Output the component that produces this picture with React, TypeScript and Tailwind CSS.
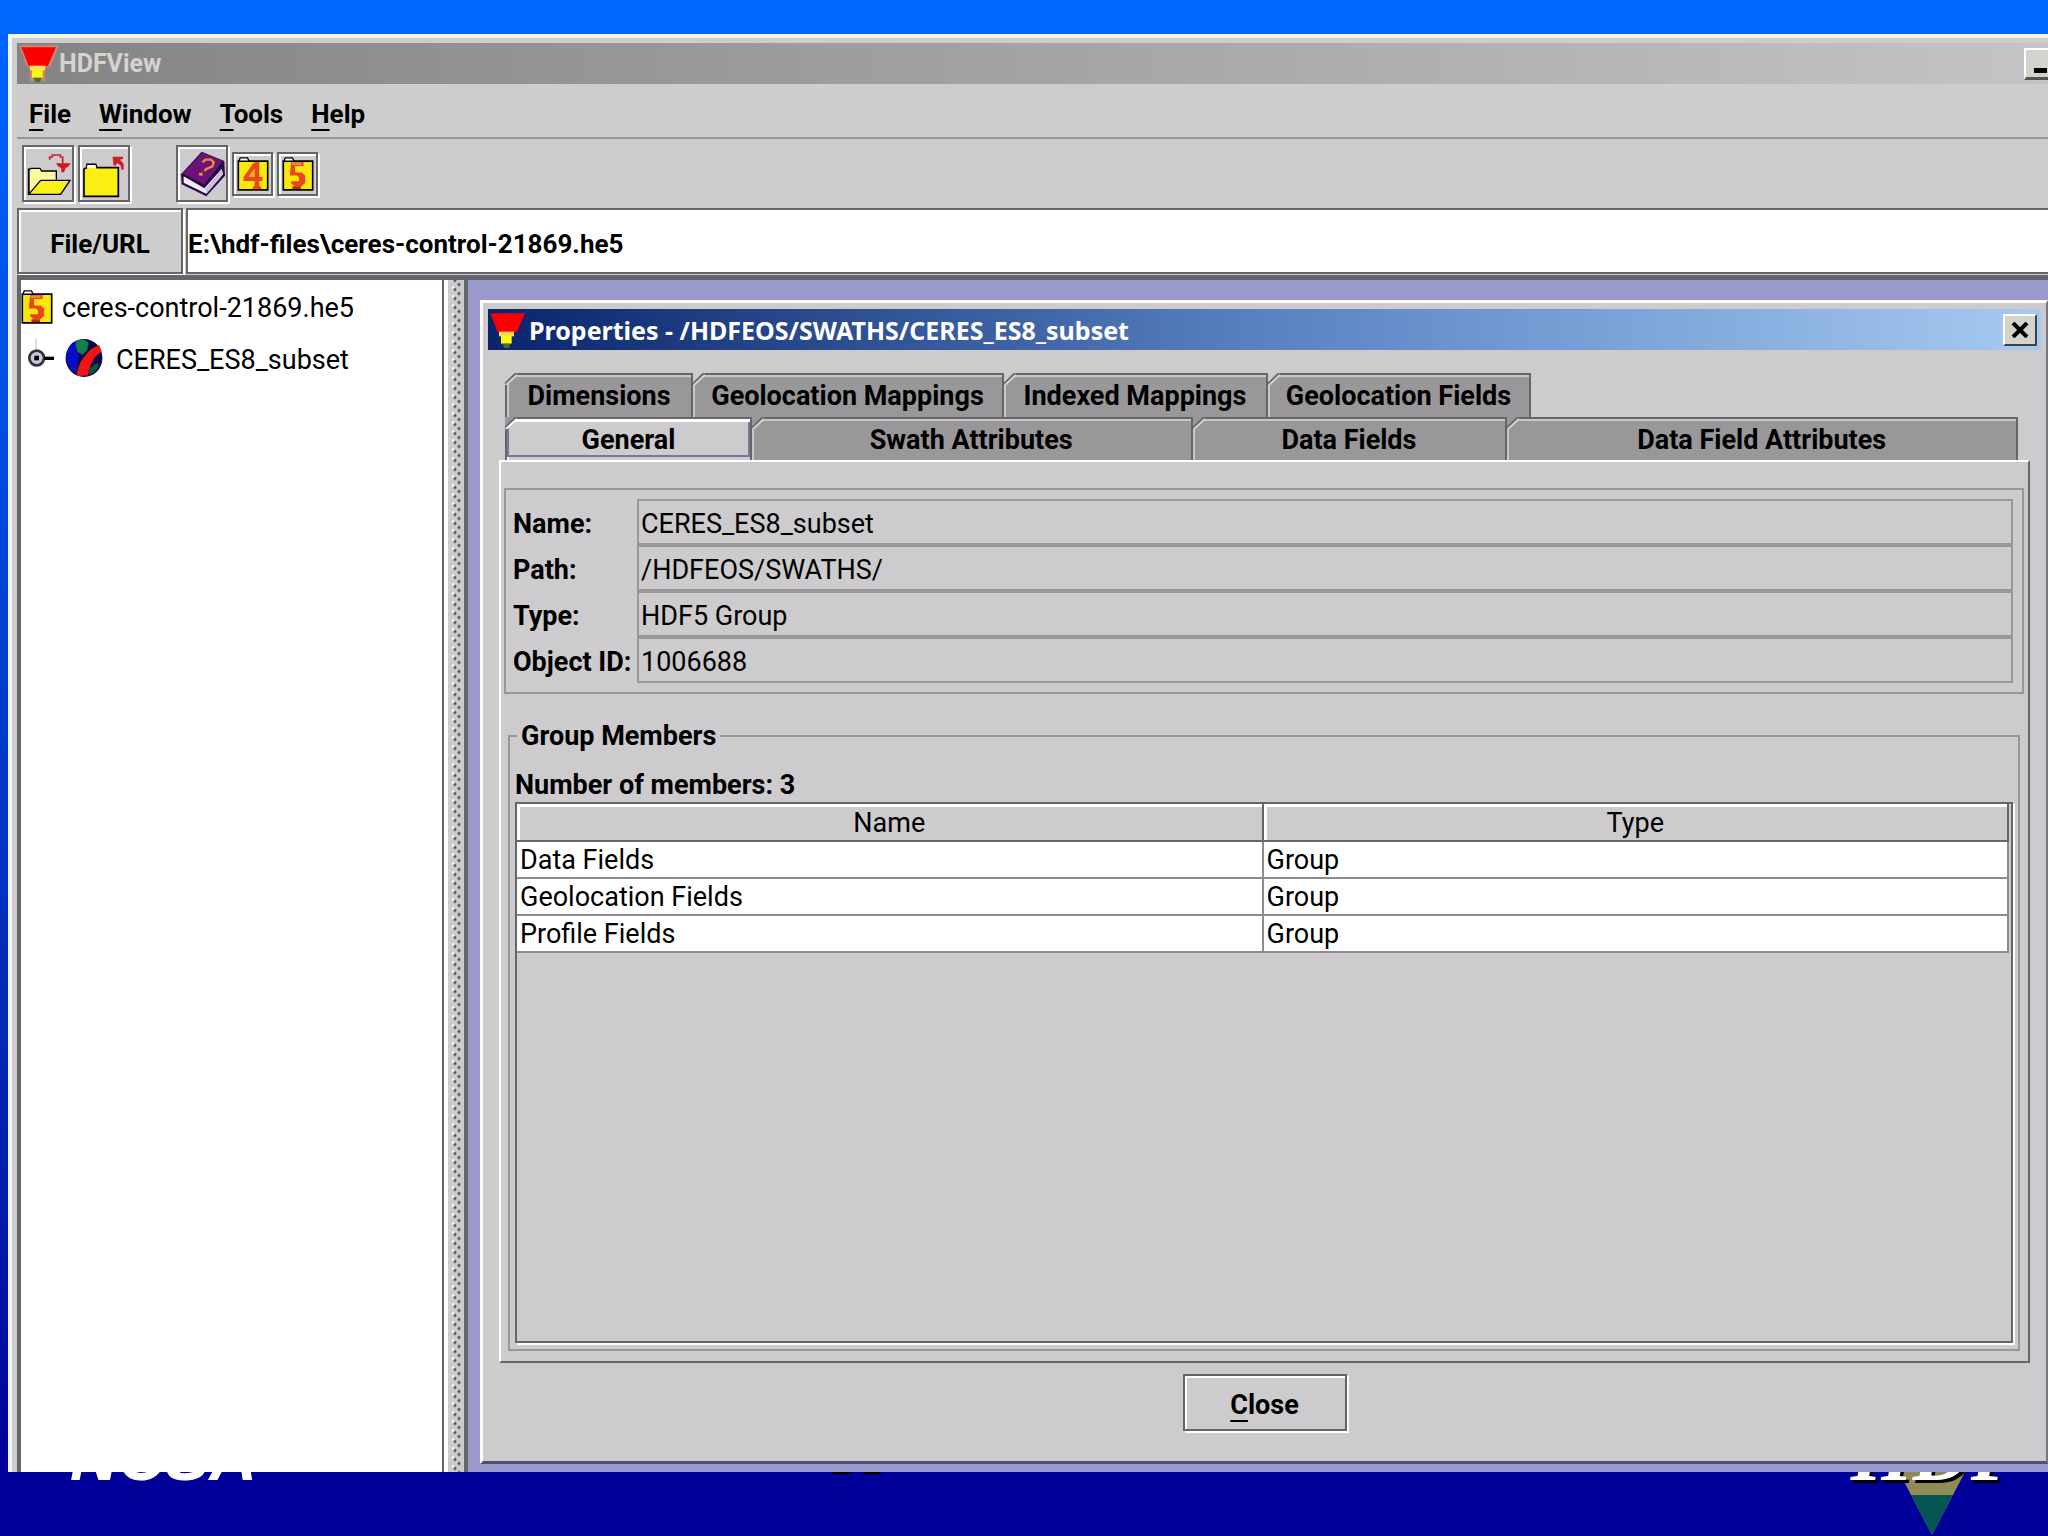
import type { ReactNode } from "react";

const toolButton =
  "flex items-center justify-center border-2 border-[#666666] bg-[#cdcbcd] shadow-[inset_2px_2px_0_#ffffff,2px_2px_0_#ffffff]";

function LogoIcon({ glow = false }: { glow?: boolean }) {
  return (
    <svg className="h-[38px] w-10 shrink-0" viewBox="57 129 120 114" aria-hidden="true">
      {glow && <polygon points="57,130 177,130 152,192 136,198 134,238 90,238 88,198 80,192" fill="#c98872" />}
      <polygon points="64,136 168,136 144,192 86,192" fill="#fb0000" />
      <rect x="90" y="191" width="45" height="14" fill="#fbe04a" />
      <rect x="96" y="204" width="32" height="23" fill="#fafa10" />
      <polygon points="101,227 124,227 120,240 106,240" fill="#4d6e20" />
    </svg>
  );
}

function OpenIcon() {
  return (
    <svg className="h-full w-full" viewBox="72 441 144 153" aria-hidden="true">
      <path d="M86 578V508l7-6h27l5 8h44v26" fill="#fbf9a0" stroke="#000" strokeWidth="4" />
      <path d="M86 580l36-42h88l-28 42z" fill="#fbf21a" stroke="#000" strokeWidth="4" />
      <path d="M86 502v78" stroke="#000" strokeWidth="5" />
      <path d="M149 476v-8h8v-6h24v6h7v20" fill="none" stroke="#d02028" strokeWidth="5" />
      <polygon points="168,487 212,487 204,498 197,500 192,514 184,514 184,502 174,496" fill="#d01820" />
    </svg>
  );
}

function CloseFolderIcon() {
  return (
    <svg className="h-full w-full" viewBox="240 441 144 153" aria-hidden="true">
      <path d="M252 586V504l8-4 1-10h26l4 10h64v86z" fill="#f9ef12" stroke="#000" strokeWidth="5" />
      <path d="M262 492h24l3 8h-28z" fill="#fff" />
      <polygon points="338,467 369,467 369,474 360,476 371,488 371,506 364,506 362,494 352,486 346,494 340,492" fill="#cc2028" />
    </svg>
  );
}

function BookIcon() {
  return (
    <svg className="h-full w-full" viewBox="533 441 144 153" aria-hidden="true">
      <polygon points="542,520 604,452 672,480 674,524 618,586 544,550" fill="#2a0a45" />
      <polygon points="550,526 612,562 664,504 668,520 618,578 550,545" fill="#f1eef8" />
      <polygon points="616,562 664,506 668,520 618,578" fill="#c9bfe0" />
      <polygon points="546,518 606,455 669,481 612,552" fill="#6a1478" />
      <path d="M546 520l66 34 56-70" fill="none" stroke="#2b0838" strokeWidth="5" />
      <path d="M606 484l10-8h16l8 8-4 12-18 8-6 6" fill="none" stroke="#f08a30" strokeWidth="7" />
      <rect x="596" y="515" width="11" height="9" fill="#f08a30" />
    </svg>
  );
}

function NumberFolderIcon({ digit, className }: { digit: "4" | "5"; className: string }) {
  return (
    <svg className={className} viewBox="844 472 98 104" aria-hidden="true">
      <path d="M848 574V486h90v88z" fill="#fbe70c" stroke="#000" strokeWidth="5" />
      <path d="M850 486l4-10h22l5 10z" fill="#fff" stroke="#000" strokeWidth="4" />
      {digit === "5" ? (
        <>
          <path d="M872 489h38v12h-26v20h20l11 9v22l-11 11h-20l-12-8v-7h24v-12l-6-6h-22z" fill="#e8481a" />
          <path d="M876 563h26v9h-26z" fill="#b82810" />
          <path d="M874 490h30v8h-30z" fill="#f08c30" />
        </>
      ) : (
        <>
          <path d="M900 489h12v46h10v12h-10v14l6 6v5h-26v-5l6-6v-14h-34v-12l28-40z" fill="#e8481a" />
          <path d="M898 508l-20 27h20z" fill="#fbb81a" />
        </>
      )}
    </svg>
  );
}

function GlobeIcon() {
  return (
    <svg className="h-10 w-10" viewBox="196 204 120 126" aria-hidden="true">
      <ellipse cx="256" cy="267" rx="58" ry="60" fill="#08084a" />
      <path d="M200 262q4-40 34-50l-2 30 8 20-10 50q-28-14-30-50z" fill="#0c0cc8" />
      <path d="M232 212l24-3 14 10-4 24-14 14-16-8-6-20z" fill="#12804a" />
      <path d="M274 300l22-18 8 8-16 22-18 10z" fill="#0a5a3a" />
      <path d="M304 226l8 22q-30 10-44 74l-34 2q-2-26 20-58 20-30 50-40z" fill="#f01414" />
    </svg>
  );
}

function MenuItem({ label }: { label: string }) {
  return (
    <button className="leading-8">
      <span className="underline decoration-2 underline-offset-[6px]">{label[0]}</span>
      {label.slice(1)}
    </button>
  );
}

function Tab({
  children,
  width = "",
  corner,
  first = false,
  selected = false,
}: {
  children: ReactNode;
  width?: string;
  corner: string;
  first?: boolean;
  selected?: boolean;
}) {
  return (
    <button
      role="tab"
      aria-selected={selected}
      className={`relative h-full whitespace-nowrap border-t-2 border-r-2 border-[#666666] leading-8 ${width} ${
        first ? "border-l-2" : ""
      } ${
        selected
          ? "bg-[#cdcbcd] shadow-[inset_2px_3px_0_#ffffff]"
          : "bg-[#999799] shadow-[inset_2px_2px_0_#c9c7c9]"
      }`}
    >
      {selected && <span className="absolute inset-x-0 top-[3px] bottom-[3px] border-x-2 border-b-2 border-[#77779c]" />}
      <svg
        className={`absolute -top-0.5 h-3 w-3 ${first ? "-left-0.5" : "left-0"}`}
        viewBox="0 0 12 12"
        aria-hidden="true"
      >
        <polygon points="0,0 12,0 0,12" className={corner} />
        <path d="M0 11L11 0" stroke="#666" strokeWidth="2" />
        <path d="M1 12L12 2" stroke={selected ? "#fff" : "#d4d2d4"} strokeWidth="2" />
      </svg>
      <span className="relative">{children}</span>
    </button>
  );
}

const properties = [
  { id: "name", label: "Name:", value: "CERES_ES8_subset" },
  { id: "path", label: "Path:", value: "/HDFEOS/SWATHS/" },
  { id: "type", label: "Type:", value: "HDF5 Group" },
  { id: "oid", label: "Object ID:", value: "1006688" },
];

const members = ["Data Fields", "Geolocation Fields", "Profile Fields"];

function PropertiesDialog() {
  return (
    <section
      role="dialog"
      aria-label="Properties"
      className="flex min-w-0 flex-1 flex-col border-t-[3px] border-r-2 border-b-[3px] border-l-[3px] border-t-white border-r-[#77777f] border-b-[#50506c] border-l-white bg-[#cdcbcd] px-[5px] pt-1.5"
    >
      <header className="flex h-[41px] items-center bg-linear-to-r from-[#0a246a] via-[#5a82c2] to-[#a6caf0] text-white">
        <LogoIcon />
        <h2 className="flex-1 pl-px font-['Noto_Sans'] text-[25px] leading-8 font-bold">
          Properties - /HDFEOS/SWATHS/CERES_ES8_subset
        </h2>
        <button
          aria-label="Close window"
          className="mr-1 flex h-8 w-[34px] items-center justify-center border-2 border-t-white border-r-[#404048] border-b-[#404048] border-l-white bg-[#d4d2cc]"
        >
          <svg className="h-4 w-[18px]" viewBox="0 0 18 16" aria-hidden="true">
            <path d="M2 1L16 15M16 1L2 15" stroke="#000" strokeWidth="4" />
          </svg>
        </button>
      </header>

      <div role="tablist" className="mt-[23px] mr-[23px] ml-[17px]">
        <div className="flex h-11">
          <Tab width="w-[188px]" corner="fill-[#cdcbcd]" first>Dimensions</Tab>
          <Tab width="w-[311px]" corner="fill-[#cdcbcd]">Geolocation Mappings</Tab>
          <Tab width="w-[264px]" corner="fill-[#cdcbcd]">Indexed Mappings</Tab>
          <Tab width="w-[263px]" corner="fill-[#cdcbcd]">Geolocation Fields</Tab>
        </div>
        <div className="grid h-[43px] grid-cols-[247fr_441fr_315fr_511fr]">
          <Tab corner="fill-[#999799]" first selected>General</Tab>
          <Tab corner="fill-[#999799]">Swath Attributes</Tab>
          <Tab corner="fill-[#999799]">Data Fields</Tab>
          <Tab corner="fill-[#999799]">Data Field Attributes</Tab>
        </div>
      </div>

      <div
        role="tabpanel"
        className="mr-[11px] ml-[11px] flex flex-1 flex-col border-2 border-t-white border-r-[#666666] border-b-[#666666] border-l-white pt-[26px] pr-1 pb-2.5 pl-[3px]"
      >
        <div className="border-2 border-[#999799] py-[9px] pr-[9px] pl-[7px]">
          {properties.map((p) => (
            <div key={p.id} className="flex h-[46px] items-stretch">
              <label htmlFor={p.id} className="w-[124px] shrink-0 pt-0.5 leading-[46px] whitespace-nowrap">
                {p.label}
              </label>
              <input
                id={p.id}
                readOnly
                value={p.value}
                className="min-w-0 flex-1 border-2 border-[#999799] bg-transparent pt-1 pl-0.5 text-[27px] font-normal outline-none"
              />
            </div>
          ))}
        </div>

        <fieldset className="mx-1 mt-[26px] flex min-w-0 flex-1 flex-col border-2 border-[#999799] px-[5px] pb-1.5">
          <legend className="ml-0.5 px-1 leading-8">Group Members</legend>
          <p className="mt-4 leading-[34px]">Number of members: 3</p>
          <div className="flex-1 border-2 border-[#666666] pr-0.5 shadow-[2px_2px_0_#ffffff]">
            <table className="w-full table-fixed border-collapse text-[27px] leading-8 font-normal">
              <thead>
                <tr className="h-[37px]">
                  {["Name", "Type"].map((h) => (
                    <th
                      key={h}
                      className="border-r-2 border-b-2 border-[#666666] p-0 pt-0.5 font-normal shadow-[inset_3px_3px_0_#ffffff]"
                    >
                      {h}
                    </th>
                  ))}
                </tr>
              </thead>
              <tbody>
                {members.map((m) => (
                  <tr key={m} className="h-[37px] bg-white">
                    <td className="border-r-2 border-b-2 border-[#8d8b8d] p-0 pl-[3px]">{m}</td>
                    <td className="border-r-2 border-b-2 border-[#8d8b8d] p-0 pl-[3px]">Group</td>
                  </tr>
                ))}
              </tbody>
            </table>
          </div>
        </fieldset>
      </div>

      <div className="flex h-[98px] justify-center pt-[11px]">
        <button className="h-[57px] w-[164px] border-2 border-[#666666] pt-1 leading-8 shadow-[inset_2px_2px_0_#ffffff,2px_2px_0_#ffffff]">
          <span className="underline decoration-2 underline-offset-[6px]">C</span>lose
        </button>
      </div>
    </section>
  );
}

export default function App() {
  return (
    <div className="flex h-screen flex-col overflow-hidden bg-linear-to-b from-[#0066ff] to-[#000099] to-95% font-['Roboto','Liberation_Sans',sans-serif] text-[27px] font-bold text-black">
      <div className="h-[34px] shrink-0 bg-[#0066ff]" />
      <main className="ml-2 flex min-h-0 flex-1 flex-col border-t-4 border-l-4 border-[#f4f2ee] bg-[#cdcdcd] pt-[5px] pl-[5px]">
        <header className="flex h-[41px] shrink-0 items-center bg-linear-to-r from-[#848484] to-[#c4c4c4] pl-0.5">
          <LogoIcon glow />
          <h1 className="flex-1 text-[25px] leading-8 font-bold text-[#d6d3cf]">HDFView</h1>
          <button
            aria-label="Minimize"
            className="flex h-8 w-6 items-end border-t-2 border-b-3 border-l-2 border-t-white border-b-[#555550] border-l-white bg-[#d4d2cc] pb-1 pl-2"
          >
            <span className="h-[5px] w-[13px] bg-black" />
          </button>
        </header>

        <nav className="flex h-[55px] shrink-0 items-center gap-7 border-b-2 border-[#999799] pt-1.5 pl-3 text-[26px]">
          <MenuItem label="File" />
          <MenuItem label="Window" />
          <MenuItem label="Tools" />
          <MenuItem label="Help" />
        </nav>

        <div role="toolbar" className="flex h-[69px] shrink-0 items-center gap-1 pl-[5px]">
          <button aria-label="Open" className={`${toolButton} h-[57px] w-[52px]`}>
            <OpenIcon />
          </button>
          <button aria-label="Close file" className={`${toolButton} h-[57px] w-[52px]`}>
            <CloseFolderIcon />
          </button>
          <button aria-label="Help" className={`${toolButton} ml-[42px] h-[57px] w-[52px]`}>
            <BookIcon />
          </button>
          <button aria-label="HDF4 library" className={`${toolButton} h-11 w-[41px]`}>
            <NumberFolderIcon digit="4" className="h-[35px] w-8" />
          </button>
          <button aria-label="HDF5 library" className={`${toolButton} h-11 w-[41px]`}>
            <NumberFolderIcon digit="5" className="h-[35px] w-8" />
          </button>
        </div>

        <div className="flex h-[67px] shrink-0 gap-[3px] text-[26px]">
          <button className="h-[66px] w-[166px] border-2 border-[#666666] pt-1.5 shadow-[inset_2px_2px_0_#ffffff,2px_2px_0_#ffffff]">
            File/URL
          </button>
          <input
            aria-label="File/URL"
            readOnly
            value="E:\hdf-files\ceres-control-21869.he5"
            className="h-[66px] min-w-0 flex-1 border-2 border-r-0 border-[#666666] bg-white pt-1.5 outline-none"
          />
        </div>

        <div className="flex min-h-0 flex-1 border-t-[5px] border-[#66666f]">
          <aside className="w-[427px] shrink-0 border-r-2 border-l-4 border-[#666666] bg-white text-[27px] font-normal">
            <ul role="tree">
              <li role="treeitem" className="flex h-[52px] items-center gap-[9px]">
                <NumberFolderIcon digit="5" className="h-[35px] w-8" />
                <span className="pt-1">ceres-control-21869.he5</span>
              </li>
              <li role="treeitem" className="flex h-[52px] items-center pl-1.5">
                <svg className="mr-2.5 h-10 w-[27px]" viewBox="86 200 81 120" aria-hidden="true">
                  <path d="M113 200v35" stroke="#bbb" strokeWidth="3" />
                  <circle cx="115" cy="260" r="22" fill="#c8c8dc" stroke="#33333c" strokeWidth="8" />
                  <rect x="108" y="253" width="14" height="14" fill="#000" />
                  <path d="M137 261h30" stroke="#000" strokeWidth="10" />
                </svg>
                <GlobeIcon />
                <span className="pt-1 pl-3">CERES_ES8_subset</span>
              </li>
            </ul>
          </aside>
          <div className="w-[20px] shrink-0 border-l-4 border-white bg-[#cdcbcd] bg-[radial-gradient(circle_at_3px_3px,#555_1px,transparent_2px),radial-gradient(circle_at_7px_7px,#555_1px,transparent_2px),radial-gradient(circle_at_1px_1px,#fff_1px,transparent_2px)] bg-size-[9px_9px] bg-center bg-repeat-y" />
          <div className="flex min-w-0 flex-1 border-l-4 border-[#66666f] bg-[#9999cc] pt-5 pb-2 pl-3">
            <PropertiesDialog />
          </div>
        </div>
      </main>

      <footer className="relative h-16 shrink-0 overflow-hidden">
        <span className="absolute -top-12 left-[70px] font-['Liberation_Sans'] text-[66px] leading-none italic text-white">
          NCSA
        </span>
        <span className="absolute -top-12 left-[832px] font-['Liberation_Serif'] text-[60px] leading-none font-bold italic">
          35
        </span>
        <svg className="absolute top-0 right-[83px] h-16 w-[66px]" viewBox="0 0 66 64" aria-hidden="true">
          <polygon points="0,0 66,0 33,63" fill="#8f8a58" />
          <polygon points="12,23 54,23 33,63" fill="#055454" />
        </svg>
        <span className="absolute -top-[59px] right-6 font-['Liberation_Serif'] text-[80px] leading-none italic text-white [text-shadow:3px_3px_0_#000]">
          HDF
        </span>
      </footer>
    </div>
  );
}
